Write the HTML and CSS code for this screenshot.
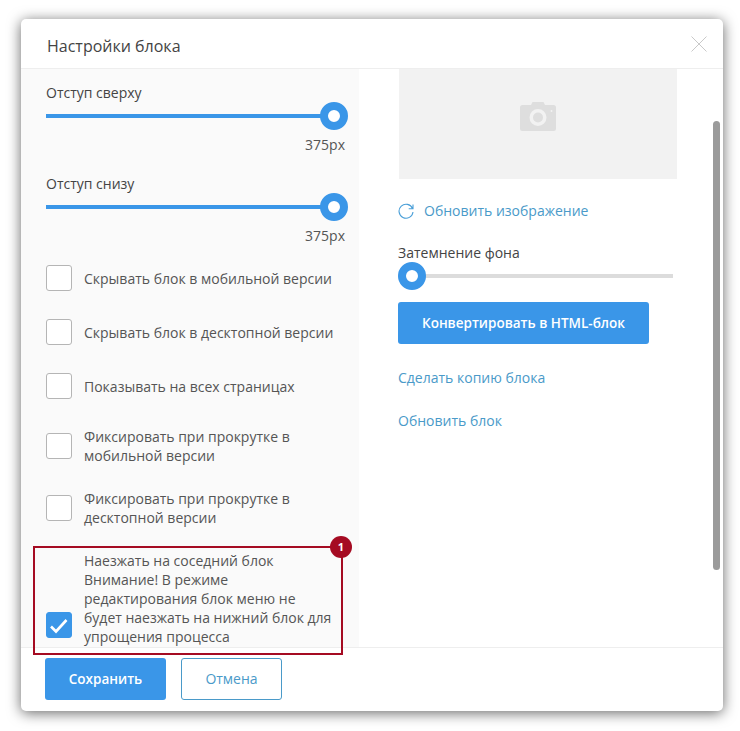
FILE: index.html
```html
<!DOCTYPE html>
<html lang="ru">
<head>
<meta charset="utf-8">
<title>Настройки блока</title>
<link rel="stylesheet" href="styles.css">
</head>
<body>
<div class="modal">
  <header class="modal-head">
    <h1 class="modal-title">Настройки блока</h1>
    <svg class="close" width="16" height="16" viewBox="0 0 16 16"><path d="M.5.5l15 15M15.5.5l-15 15" stroke="#c9c9c9" stroke-width="1" fill="none"/></svg>
  </header>
  <div class="modal-body">
    <div class="col-left">
      <div class="slider-group">
        <div class="label">Отступ сверху</div>
        <div class="slider"><div class="track track-full"></div><div class="knob"></div></div>
        <div class="value">375px</div>
      </div>
      <div class="slider-group second">
        <div class="label">Отступ снизу</div>
        <div class="slider"><div class="track track-full"></div><div class="knob"></div></div>
        <div class="value">375px</div>
      </div>
      <div class="check-row r1"><span class="box"></span><span class="check-text">Скрывать блок в мобильной версии</span></div>
      <div class="check-row r2"><span class="box"></span><span class="check-text">Скрывать блок в десктопной версии</span></div>
      <div class="check-row r2"><span class="box"></span><span class="check-text">Показывать на всех страницах</span></div>
      <div class="check-row r3"><span class="box"></span><span class="check-text">Фиксировать при прокрутке в<br>мобильной версии</span></div>
      <div class="check-row r4"><span class="box"></span><span class="check-text">Фиксировать при прокрутке в<br>десктопной версии</span></div>
      <div class="check-row r5"><span class="box box-on"><svg width="26" height="26" viewBox="0 0 26 26"><path d="M5 14.500l5 5L20.500 8" stroke="#fff" stroke-width="2.600" fill="none"/></svg></span><span class="check-text">Наезжать на соседний блок<br>Внимание! В режиме<br>редактирования блок меню не<br>будет наезжать на нижний блок для<br>упрощения процесса</span></div>
    </div>
    <div class="col-right">
      <div class="preview">
        <svg width="36" height="29" viewBox="0 0 36 29"><path fill="#dedede" fill-rule="evenodd" d="M11 3l1.500-3h11L25 3h8.500A2.500 2.500 0 0 1 36 5.500v21a2.500 2.500 0 0 1-2.500 2.500h-31A2.500 2.500 0 0 1 0 26.500v-21A2.500 2.500 0 0 1 2.500 3zM18 7a8.500 8.500 0 1 0 0 17 8.500 8.500 0 0 0 0-17zM18 10.500a5 5 0 1 1 0 10 5 5 0 0 1 0-10z"/><circle cx="31.500" cy="9" r="1" fill="#f2f2f2"/></svg>
      </div>
      <a class="link refresh"><svg width="16" height="17" viewBox="0 0 16 17"><path d="M14.500 5.500A7 7 0 1 0 15 9M15 1.500v4.200h-4.300" stroke="#4a9fd8" stroke-width="1.100" fill="none"/></svg>Обновить изображение</a>
      <div class="label dark">Затемнение фона</div>
      <div class="slider dim"><div class="track track-empty"></div><div class="knob knob-left"></div></div>
      <button class="btn btn-primary convert">Конвертировать в HTML-блок</button>
      <a class="link copy">Сделать копию блока</a>
      <a class="link update">Обновить блок</a>
    </div>
  </div>
  <footer class="modal-foot">
    <button class="btn btn-primary save">Сохранить</button>
    <button class="btn btn-outline">Отмена</button>
  </footer>
  <div class="scrollbar"></div>
  <div class="highlight"><span class="badge">1</span></div>
</div>
</body>
</html>
```
FILE: styles.css
```css
* { box-sizing: border-box; }
html, body { margin: 0; height: 100%; }
body {
  background: #fff;
  padding: 19px 17px 20px 21px;
  font-family: "Open Sans", "Noto Sans", sans-serif;
  font-size: 14px;
  line-height: 19px;
  color: #555;
}
.modal {
  position: relative;
  height: 692px;
  background: #fff;
  border-radius: 5px;
  box-shadow: 0 2px 14px rgba(0, 0, 0, .6);
  display: flex;
  flex-direction: column;
  overflow: visible;
}
.modal-head {
  height: 50px;
  flex: none;
  display: flex;
  align-items: center;
  justify-content: space-between;
  padding: 0 16px 0 26px;
  border-bottom: 1px solid #eee;
}
.modal-title {
  margin: 5px 0 0;
  font-size: 16px;
  font-weight: 400;
  color: #444;
  line-height: 22px;
}
.close { margin-top: 0; }
.modal-body { flex: 1; display: flex; min-height: 0; overflow: hidden; }
.col-left {
  width: 338px;
  flex: none;
  background: #fafafa;
  padding: 14px 14px 0 25px;
}
.label { line-height: 20px; color: #444; }
.label.dark { color: #444; }
.slider { position: relative; height: 28px; margin-top: -1px; }
.track { position: absolute; left: 0; top: 12px; height: 4px; }
.track-full { right: 0; background: #3a96e8; }
.track-empty { right: 0; background: #dcdcdc; }
.knob {
  position: absolute;
  right: -3px;
  top: 0;
  width: 28px;
  height: 28px;
  border-radius: 50%;
  background: #fff;
  border: 8px solid #3a96e8;
}
.knob-left { left: 0; right: auto; }
.value { text-align: right; line-height: 20px; color: #555; margin-top: 5px; }
.second { margin-top: 19px; }
.check-row { display: flex; align-items: center; gap: 12px; }
.box {
  flex: none;
  width: 26px;
  height: 26px;
  background: #fff;
  border: 1px solid #b5b5b5;
  border-radius: 3px;
}
.box-on { background: #3a96e8; border-color: #3a96e8; display: block; margin-bottom: 8px; }
.box-on svg { display: block; margin: -1px; }
.check-text { color: #555; }
.r1 { margin-top: 19px; }
.r2 { margin-top: 28px; }
.r3 { margin-top: 28px; }
.r4 { margin-top: 24px; }
.r5 { margin-top: 24px; align-items: flex-end; }
.col-right {
  flex: 1;
  padding: 0 0 0 39px;
  min-width: 0;
}
.preview {
  width: 278px;
  height: 110px;
  margin-left: 1px;
  background: #f2f2f2;
  display: flex;
  align-items: center;
  justify-content: center;
  padding-bottom: 16px;
}
.link { display: block; color: #4a9ac9; line-height: 20px; }
.refresh { display: flex; align-items: center; gap: 10px; margin-top: 22px; }
.col-right > .label { margin-top: 22px; }
.dim { width: 275px; margin-top: -1px; }
.btn {
  font-family: inherit;
  font-size: 14px;
  border-radius: 3px;
  height: 42px;
  padding: 0;
  cursor: pointer;
}
.btn-primary {
  background: #3a96e8;
  border: 0;
  color: #fff;
  font-size: 13.500px;
  font-weight: 600;
}
.btn-outline {
  width: 101px;
  background: #fff;
  border: 1px solid #4a9ac9;
  color: #4a9ac9;
  padding-bottom: 2px;
}
.convert { display: block; width: 251px; margin-top: 12px; }
.copy { margin-top: 24px; }
.update { margin-top: 23px; }
.modal-foot {
  height: 64px;
  flex: none;
  display: flex;
  gap: 15px;
  padding: 10px 24px 0;
  border-top: 1px solid #eee;
}
.save { width: 121px; }
.scrollbar {
  position: absolute;
  left: 692px;
  top: 102px;
  width: 7px;
  height: 449px;
  background: #9b9b9b;
  border-radius: 4px;
}
.highlight {
  position: absolute;
  left: 12px;
  top: 527px;
  width: 310px;
  height: 109px;
  border: 2px solid #a50b22;
}
.badge {
  position: absolute;
  right: -11px;
  top: -12px;
  width: 22px;
  height: 22px;
  border-radius: 50%;
  background: #a50b22;
  color: #fff;
  font-size: 11px;
  font-weight: 700;
  line-height: 22px;
  text-align: center;
}
```
